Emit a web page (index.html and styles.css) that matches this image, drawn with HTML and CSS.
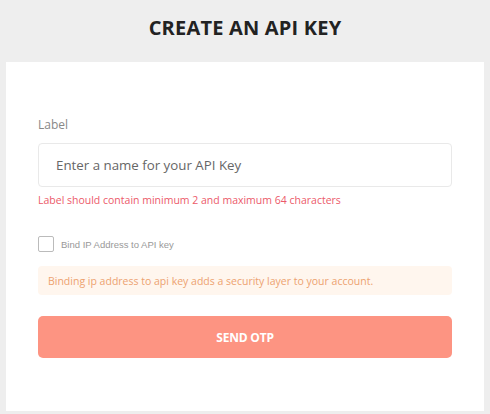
FILE: index.html
```html
<!DOCTYPE html>
<html>
<head>
<meta charset="utf-8">
<link rel="stylesheet" href="styles.css">
</head>
<body>
<div class="page">
  <h1 class="title">CREATE AN API KEY</h1>
  <div class="card">
    <label class="label">Label</label>
    <div class="input">Enter a name for your API Key</div>
    <div class="error">Label should contain minimum 2 and maximum 64 characters</div>
    <div class="check-row">
      <span class="checkbox"></span>
      <span class="check-label">Bind IP Address to API key</span>
    </div>
    <div class="info">Binding ip address to api key adds a security layer to your account.</div>
    <button class="btn">SEND OTP</button>
  </div>
</div>
</body>
</html>
```

FILE: styles.css
```css
html, body {
  margin: 0;
  padding: 0;
  background: #eeeeee;
}
.page {
  width: 490px;
  height: 414px;
  padding: 0 6px;
  box-sizing: border-box;
  font-family: "Open Sans", "Noto Sans", sans-serif;
}
.title {
  margin: 0;
  height: 62px;
  display: flex;
  align-items: center;
  justify-content: center;
  font-size: 20px;
  font-weight: 700;
  color: #222;
  letter-spacing: 0.2px;
  padding-bottom: 7px;
  box-sizing: border-box;
}
.card {
  background: #fff;
  height: 349px;
  padding: 55px 32px 0 32px;
  box-sizing: border-box;
  display: flex;
  flex-direction: column;
}
.label {
  font-size: 12px;
  color: #888;
  line-height: 16px;
}
.input {
  margin-top: 10px;
  height: 44px;
  border: 1px solid #e9e9e9;
  border-radius: 4px;
  box-sizing: border-box;
  display: flex;
  align-items: center;
  padding-left: 17px;
  font-family: "Open Sans", "Noto Sans", sans-serif;
  font-size: 13.3px;
  color: #666;
}
.error {
  margin-top: 6px;
  font-size: 10.5px;
  line-height: 14px;
  color: #ec5a6a;
}
.check-row {
  margin-top: 29px;
  display: flex;
  align-items: center;
  height: 16px;
}
.checkbox {
  width: 16px;
  height: 16px;
  border: 1px solid #bbb;
  border-radius: 2px;
  margin-right: 7px;
  box-sizing: border-box;
}
.check-label {
  font-family: "Liberation Sans", Arial, sans-serif;
  font-size: 9.5px;
  color: #999;
}
.info {
  margin-top: 14px;
  height: 29px;
  background: #fff6ee;
  border-radius: 4px;
  display: flex;
  align-items: center;
  padding-left: 10px;
  font-size: 10.5px;
  color: #eda270;
}
.btn {
  margin-top: 21px;
  height: 42px;
  border: none;
  border-radius: 5px;
  background: #fd9482;
  color: #fff;
  font-family: "Open Sans", "Noto Sans", sans-serif;
  font-weight: 700;
  font-size: 12px;
  letter-spacing: -0.2px;
}
```
